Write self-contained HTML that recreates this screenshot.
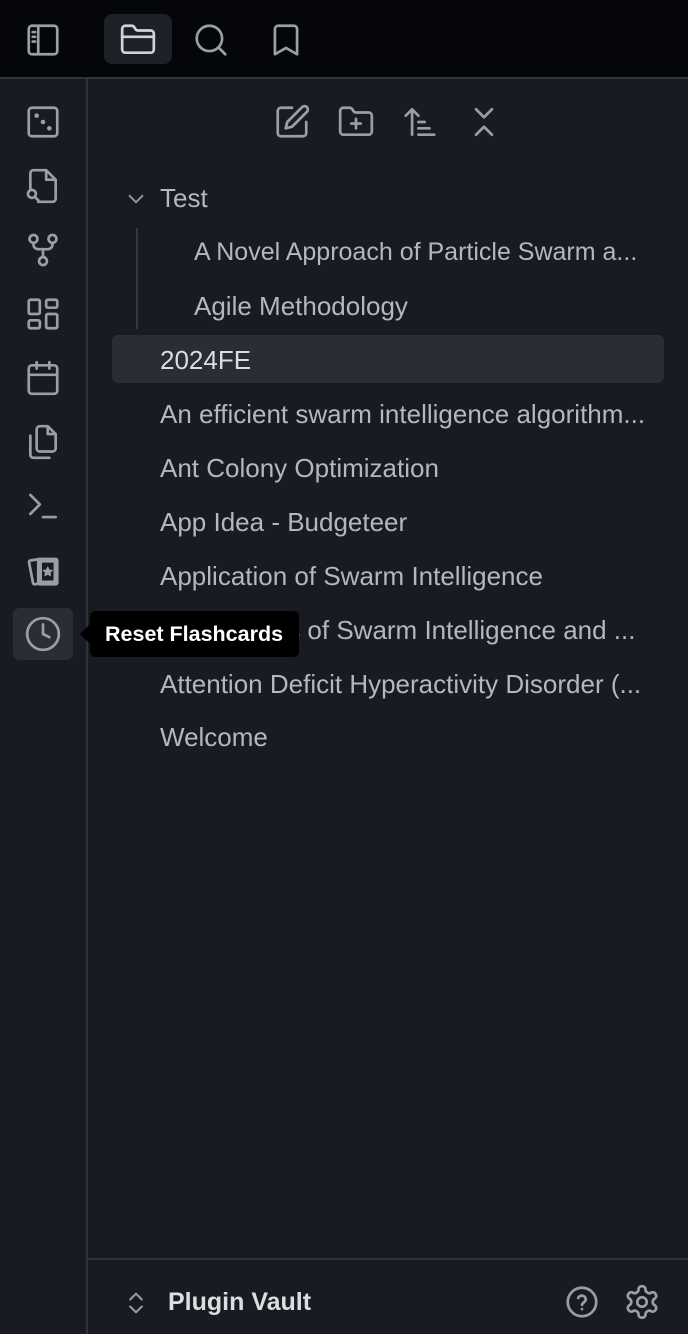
<!DOCTYPE html>
<html><head><meta charset="utf-8"><style>
*{margin:0;padding:0;box-sizing:border-box}
body{width:688px;height:1334px;background:#181b22;font-family:"Liberation Sans",sans-serif;position:relative;overflow:hidden}
.top{position:absolute;left:0;top:0;width:688px;height:79px;background:#05060a;border-bottom:2px solid #30333b}
.ic{position:absolute;width:38px;height:38px;fill:none;stroke:#9a9ea6;stroke-width:1.7;stroke-linecap:round;stroke-linejoin:round}
.strip{position:absolute;left:0;top:79px;width:88px;height:1255px;border-right:2px solid #30333b}
.row{position:absolute;left:160px;font-size:26px;color:#b3b7bf;white-space:nowrap;width:500px;overflow:hidden;line-height:30px}
</style></head><body>
<div class="top"></div>
<div style="position:absolute;left:104px;top:14px;width:68px;height:50px;background:#1e2027;border-radius:8px"></div>
<svg class="ic" style="left:24px;top:21px" viewBox="0 0 24 24"><rect x="3" y="3" width="18" height="18" rx="2"/><path d="M9 3v18M5.5 7h1.5M5.5 10h1.5M5.5 13h1.5"/></svg>
<svg class="ic" style="left:119px;top:21px;stroke:#d0d3d8" viewBox="0 0 24 24"><path d="M20 20a2 2 0 0 0 2-2V8a2 2 0 0 0-2-2h-7.9a2 2 0 0 1-1.7-.9l-.8-1.2A2 2 0 0 0 7.9 3H4a2 2 0 0 0-2 2v13a2 2 0 0 0 2 2Z"/><path d="M2 10h20"/></svg>
<svg class="ic" style="left:192px;top:21px" viewBox="0 0 24 24"><circle cx="11" cy="11" r="8"/><path d="m21 21-4.3-4.3"/></svg>
<svg class="ic" style="left:267px;top:21px" viewBox="0 0 24 24"><path d="m19 21-7-4-7 4V5a2 2 0 0 1 2-2h10a2 2 0 0 1 2 2v16z"/></svg>
<div class="strip"></div>
<svg class="ic" style="left:24px;top:103px" viewBox="0 0 24 24"><rect x="3" y="3" width="18" height="18" rx="2"/><circle cx="8" cy="8" r=".6" fill="#9a9ea6"/><circle cx="12" cy="12" r=".6" fill="#9a9ea6"/><circle cx="16" cy="16" r=".6" fill="#9a9ea6"/></svg>
<svg class="ic" style="left:24px;top:167px" viewBox="0 0 24 24"><path d="M14 2v6h6M4 14V4a2 2 0 0 1 2-2h8l6 6v12a2 2 0 0 1-2 2H9"/><circle cx="5" cy="17" r="2.5"/><path d="m9 21-2.2-2.2"/></svg>
<svg class="ic" style="left:24px;top:231px" viewBox="0 0 24 24"><circle cx="6" cy="5" r="2.5"/><circle cx="18" cy="5" r="2.5"/><circle cx="12" cy="19" r="2.5"/><path d="M6 7.5v1a3 3 0 0 0 3 3h6a3 3 0 0 0 3-3v-1M12 11.5v5"/></svg>
<svg class="ic" style="left:24px;top:295px" viewBox="0 0 24 24"><rect x="3" y="3" width="7" height="9" rx="1"/><rect x="14" y="3" width="7" height="5" rx="1"/><rect x="14" y="12" width="7" height="9" rx="1"/><rect x="3" y="16" width="7" height="5" rx="1"/></svg>
<svg class="ic" style="left:24px;top:359px" viewBox="0 0 24 24"><rect x="3" y="4" width="18" height="18" rx="2"/><path d="M16 2v4M8 2v4M3 10h18"/></svg>
<svg class="ic" style="left:24px;top:423px" viewBox="0 0 24 24"><path d="M15 2H10a2 2 0 0 0-2 2v12a2 2 0 0 0 2 2h8a2 2 0 0 0 2-2V7Z"/><path d="M15 2v5h5M4 8v12a2 2 0 0 0 2 2h10"/></svg>
<svg class="ic" style="left:24px;top:487px" viewBox="0 0 24 24"><path d="m4 17 6-6-6-6M12 19h8"/></svg>
<svg class="ic" style="left:24px;top:551px" viewBox="0 0 24 24"><path d="M10 5 4 6a1 1 0 0 0-.8 1.2l2.5 13a1 1 0 0 0 1.2.8L9 20.6"/><rect x="9" y="5" width="12" height="16" rx="1"/><rect x="10.5" y="6.5" width="9" height="13"/><path d="m15 10 1 2 2 .2-1.5 1.4.4 2.1-1.9-1-1.9 1 .4-2.1L12 12.2l2-.2z" fill="#9a9ea6" stroke-width="0.5"/></svg>
<div style="position:absolute;left:13px;top:608px;width:60px;height:52px;background:#2a2d35;border-radius:7px"></div>
<svg class="ic" style="left:24px;top:615px" viewBox="0 0 24 24"><circle cx="12" cy="12" r="10"/><path d="M12 6v6l4 2"/></svg>
<div style="position:absolute;left:80px;top:624px;width:0;height:0;border-top:10px solid transparent;border-bottom:10px solid transparent;border-right:10px solid #000"></div>
<svg class="ic" style="left:273px;top:103px" viewBox="0 0 24 24"><path d="M12 3H5a2 2 0 0 0-2 2v14a2 2 0 0 0 2 2h14a2 2 0 0 0 2-2v-7"/><path d="M18.4 2.6a2.1 2.1 0 1 1 3 3L12 15l-4 1 1-4Z"/></svg>
<svg class="ic" style="left:337px;top:103px" viewBox="0 0 24 24"><path d="M12 10v6M9 13h6M20 20a2 2 0 0 0 2-2V8a2 2 0 0 0-2-2h-7.9a2 2 0 0 1-1.7-.9l-.8-1.2A2 2 0 0 0 7.9 3H4a2 2 0 0 0-2 2v13a2 2 0 0 0 2 2Z"/></svg>
<svg class="ic" style="left:401px;top:103px" viewBox="0 0 24 24"><path d="m3 8 4-4 4 4M7 4v16M11 12h4M11 16h7M11 20h10"/></svg>
<svg class="ic" style="left:465px;top:103px" viewBox="0 0 24 24"><path d="m7 20 5-5 5 5M7 4l5 5 5-5"/></svg>
<svg class="ic" style="left:123px;top:186px;width:26px;height:26px" viewBox="0 0 24 24"><path d="m6 9 6 6 6-6"/></svg>
<div style="position:absolute;left:136px;top:228px;width:2px;height:101px;background:#34373f"></div>
<div style="position:absolute;left:112px;top:335px;width:552px;height:48px;background:#2a2d35;border-radius:6px"></div>
<div class="row" style="top:183px">Test</div>
<div class="row" style="top:237px;left:194px;width:470px;font-size:25px">A Novel Approach of Particle Swarm a...</div>
<div class="row" style="top:291px;left:194px">Agile Methodology</div>
<div class="row" style="top:345px;color:#dcdde0">2024FE</div>
<div class="row" style="top:399px">An efficient swarm intelligence algorithm...</div>
<div class="row" style="top:453px">Ant Colony Optimization</div>
<div class="row" style="top:507px">App Idea - Budgeteer</div>
<div class="row" style="top:561px">Application of Swarm Intelligence</div>
<div class="row" style="top:615px">Applications of Swarm Intelligence and ...</div>
<div class="row" style="top:669px">Attention Deficit Hyperactivity Disorder (...</div>
<div class="row" style="top:722px">Welcome</div>
<div style="position:absolute;left:90px;top:611px;width:209px;height:46px;background:#000;border-radius:5px;color:#fff;font-weight:bold;font-size:21.5px;line-height:46px;padding-left:15px;white-space:nowrap">Reset Flashcards</div>
<div style="position:absolute;left:88px;top:1258px;width:600px;height:2px;background:#30333b"></div>
<svg class="ic" style="left:122px;top:1289px;width:28px;height:28px" viewBox="0 0 24 24"><path d="m7 15 5 5 5-5M7 9l5-5 5 5"/></svg>
<div style="position:absolute;left:168px;top:1288px;font-size:25px;font-weight:bold;color:#dcdde0">Plugin Vault</div>
<svg class="ic" style="left:563px;top:1283px" viewBox="0 0 24 24"><circle cx="12" cy="12" r="9"/><path d="M9.6 9.5a2.5 2.5 0 0 1 4.8.8c0 1.7-2.4 2.2-2.4 3.5M12 16.5h.01"/></svg>
<svg class="ic" style="left:623px;top:1283px" viewBox="0 0 24 24"><path d="M12.2 2h-.4a2 2 0 0 0-2 2v.2a2 2 0 0 1-1 1.7l-.4.3a2 2 0 0 1-2 0l-.2-.1a2 2 0 0 0-2.7.7l-.2.4a2 2 0 0 0 .7 2.7l.2.1a2 2 0 0 1 1 1.7v.5a2 2 0 0 1-1 1.7l-.2.1a2 2 0 0 0-.7 2.7l.2.4a2 2 0 0 0 2.7.7l.2-.1a2 2 0 0 1 2 0l.4.3a2 2 0 0 1 1 1.7v.2a2 2 0 0 0 2 2h.4a2 2 0 0 0 2-2v-.2a2 2 0 0 1 1-1.7l.4-.3a2 2 0 0 1 2 0l.2.1a2 2 0 0 0 2.7-.7l.2-.4a2 2 0 0 0-.7-2.7l-.2-.1a2 2 0 0 1-1-1.7v-.5a2 2 0 0 1 1-1.7l.2-.1a2 2 0 0 0 .7-2.7l-.2-.4a2 2 0 0 0-2.7-.7l-.2.1a2 2 0 0 1-2 0l-.4-.3a2 2 0 0 1-1-1.7V4a2 2 0 0 0-2-2z"/><circle cx="12" cy="12" r="3"/></svg>
</body></html>
